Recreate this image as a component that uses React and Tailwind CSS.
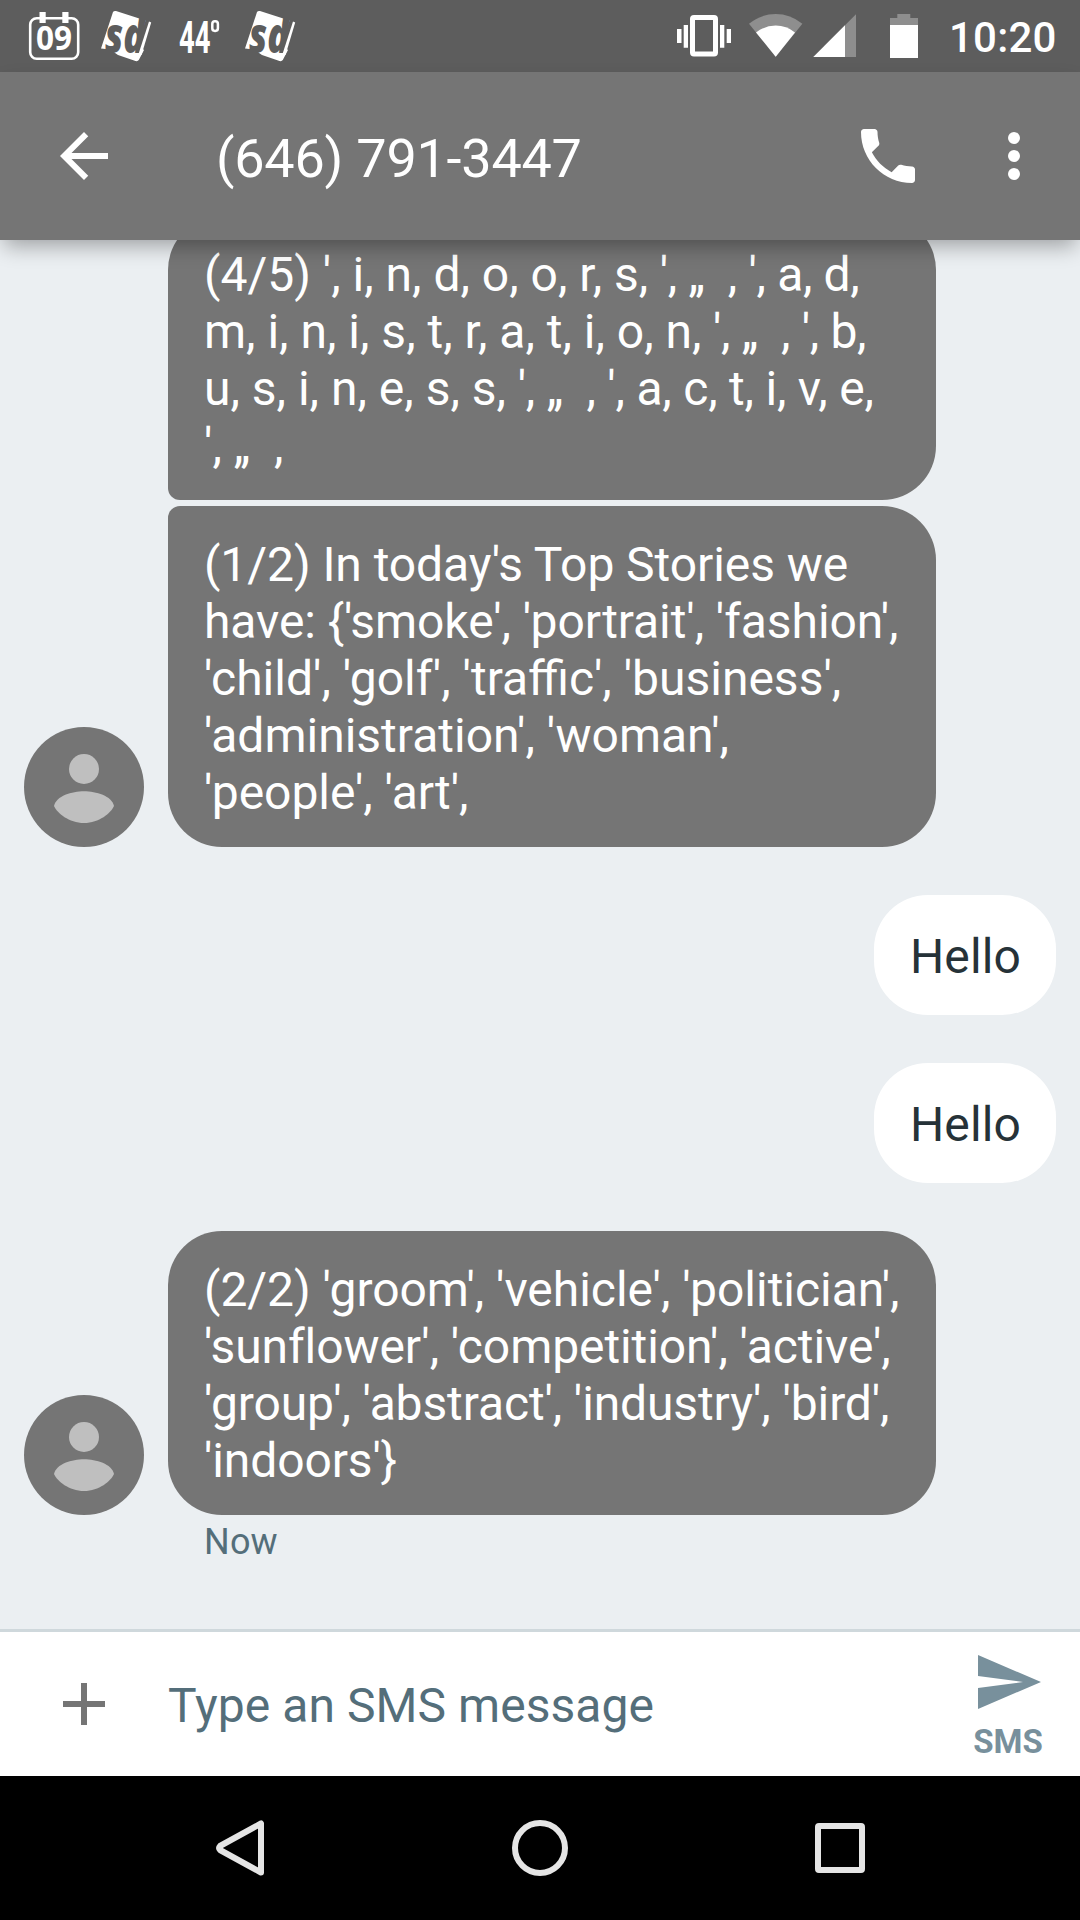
function SdIcon() {
  return (
    <svg className="block h-[72px] w-[60px] shrink-0" viewBox="99 0 60 72">
      <path d="M116 11L145.500 20.500L138 45L144 50L138.800 60Q137.700 61.600 135.500 61L118 55L110 49.500L101 48.500L113 12Q114 10.500 116 11Z" fill="#fff" />
      <text x="105" y="53" fontSize="49" fontFamily="Open Sans, sans-serif" fontWeight="800" fontStyle="italic" textLength="40" lengthAdjust="spacingAndGlyphs" fill="#5d5d5d">sd</text>
      <path d="M149 21.500L151.200 22.500L141.500 55L138.500 54Z" fill="#fff" />
    </svg>
  );
}

function StatusBar() {
  return (
    <div className="flex h-[72px] shrink-0 items-center bg-[#5d5d5d] pl-[27px] pr-6">
      <svg className="block h-[72px] w-[54px] shrink-0" viewBox="27 0 54 72">
        <rect x="30.200" y="18.200" width="48" height="40.500" rx="6.500" fill="none" stroke="#fff" strokeWidth="2.600" />
        <rect x="39.500" y="12" width="6.200" height="11" fill="#fff" />
        <rect x="62.300" y="12" width="6.200" height="11" fill="#fff" />
        <text x="36" y="49.500" fontSize="34" fontWeight="700" fontFamily="Open Sans, sans-serif" textLength="36" lengthAdjust="spacingAndGlyphs" fill="#fff">09</text>
      </svg>
      <div className="w-[18px]" />
      <SdIcon />
      <svg className="ml-[18px] block h-[72px] w-[60px] shrink-0" viewBox="177 0 60 72">
        <text x="179" y="52.500" fontSize="44" fontWeight="700" fontFamily="Roboto, sans-serif" textLength="31.500" lengthAdjust="spacingAndGlyphs" fill="#fff">44</text>
        <rect x="212.300" y="21.300" width="5.600" height="9.600" rx="2.600" fill="none" stroke="#fff" strokeWidth="2.500" />
      </svg>
      <div className="w-[6px]" />
      <SdIcon />
      <svg className="ml-auto block h-[72px] w-[246px] shrink-0" viewBox="675 0 246 72" fill="#fff">
        <rect x="692.500" y="17.500" width="23" height="36.500" rx="1.500" fill="none" stroke="#fff" strokeWidth="5" />
        <path d="M683.700 25h4.300v22.700h-4.300zM677 29h4.500v14H677zM720 25h4.300v22.700H720zM726.700 29h4.300v14h-4.300z" />
        <path d="M775.700 56.700L749 23.700Q761 14 775.700 14T802.400 23.700Z" fillOpacity="0.300" />
        <path d="M775.700 56.700L756 32.400Q765 25.600 775.700 25.600T795 32.400Z" />
        <path d="M813.300 57L856 14.300V57Z" fillOpacity="0.300" />
        <path d="M813.300 57L845 25.300V57Z" />
        <path d="M890 18h7.300v-4h13v4H918v7H890z" fillOpacity="0.300" />
        <path d="M890 25h28v33h-28z" />
      </svg>
      <span className="ml-[28px] w-[107px] whitespace-nowrap pt-1 text-right text-[42px] font-medium leading-[74px] tracking-[0.2px] text-white">10:20</span>
    </div>
  );
}

function AppBar() {
  return (
    <header className="relative z-10 flex h-[168px] shrink-0 items-center bg-[#757575] pl-12 pr-[30px] text-white shadow-[0_10px_20px_-4px_rgba(0,0,0,0.33)]">
      <svg className="size-[72px]" viewBox="0 0 24 24" fill="currentColor">
        <path d="M20 11H7.830l5.590-5.590L12 4l-8 8 8 8 1.410-1.410L7.830 13H20v-2z" />
      </svg>
      <h1 className="ml-24 flex-1 pt-[5px] text-[54px] font-normal leading-[63px] tracking-[-0.24px]">(646) 791-3447</h1>
      <svg className="size-[72px]" viewBox="0 0 24 24" fill="currentColor">
        <path d="M6.620 10.790c1.440 2.830 3.760 5.140 6.590 6.590l2.200-2.200c.270-.270.670-.360 1.020-.240 1.120.370 2.330.570 3.570.570.550 0 1 .450 1 1V20c0 .550-.450 1-1 1-9.390 0-17-7.610-17-17 0-.550.450-1 1-1h3.500c.550 0 1 .450 1 1 0 1.250.2 2.450.570 3.570.110.350.030.740-.250 1.020l-2.200 2.200z" />
      </svg>
      <svg className="ml-[54px] size-[72px]" viewBox="0 0 24 24" fill="currentColor">
        <circle cx="12" cy="6" r="2" />
        <circle cx="12" cy="12" r="2" />
        <circle cx="12" cy="18" r="2" />
      </svg>
    </header>
  );
}

function Avatar() {
  return (
    <svg className="mr-6 block size-[120px] shrink-0" viewBox="0 0 120 120">
      <circle cx="60" cy="60" r="60" fill="#757575" />
      <circle cx="60" cy="42" r="15" fill="#bfbfbf" />
      <path d="M30 79C32 69 48 64.300 60 64.300S88 69 90 79C87 86 75 96 60 96S33 86 30 79Z" fill="#bfbfbf" />
    </svg>
  );
}

function Incoming({ avatar, shape, children }) {
  return (
    <div className="flex items-end pl-6">
      {avatar ? <Avatar /> : <div className="w-36 shrink-0" />}
      <div className={`w-[768px] whitespace-pre bg-[#757575] px-9 pb-[26px] pt-[30px] text-[48px] leading-[57px] text-white ${shape}`}>
        {children}
      </div>
    </div>
  );
}

function Outgoing({ text }) {
  return (
    <div className="mt-12 flex justify-end pr-6">
      <div className="flex h-[120px] w-[182px] items-center rounded-[54px] bg-white pl-9 pt-[2px] text-[48px] leading-[57px] tracking-[0.1px] text-[#263238]">{text}</div>
    </div>
  );
}

export default function App() {
  return (
    <div className="flex h-[1920px] w-[1080px] flex-col overflow-hidden bg-[#ebeff2] font-['Roboto',sans-serif]">
      <StatusBar />
      <AppBar />
      <main className="flex min-h-0 flex-1 flex-col overflow-hidden">
        <div className="-mt-6">
          <Incoming shape="rounded-[54px] rounded-bl-[12px]">
            <p>{"(4/5) ', i, n, d, o, o, r, s,"}<span className="tracking-[-0.35px]">{" ', „  , ', a, d,"}</span></p>
            <p>{"m, i, n, i, s, t, r, a, t, i, o, n,"}<span className="tracking-[-0.35px]">{" ', „  , ', b,"}</span></p>
            <p>{"u, s, i, n, e, s, s,"}<span className="tracking-[-0.22px]">{" ', „  , ', a, c, t, i, v, e,"}</span></p>
            <p>{"', „  ,"}</p>
          </Incoming>
        </div>
        <div className="mt-[6px]">
          <Incoming avatar shape="rounded-[54px] rounded-tl-[12px]">
            <p className="tracking-[-0.07px]">(1/2) In today's Top Stories we</p>
            <p className="tracking-[-0.07px]">{"have: {'smoke', 'portrait', 'fashion',"}</p>
            <p>'child', 'golf', 'traffic', 'business',</p>
            <p>'administration', 'woman',</p>
            <p className="tracking-[-0.07px]">'people', 'art',</p>
          </Incoming>
        </div>
        <Outgoing text="Hello" />
        <Outgoing text="Hello" />
        <div className="mt-12">
          <Incoming avatar shape="rounded-[54px]">
            <p className="tracking-[-0.04px]">(2/2) 'groom', 'vehicle', 'politician',</p>
            <p className="tracking-[-0.08px]">'sunflower', 'competition', 'active',</p>
            <p className="tracking-[-0.120px]">'group', 'abstract', 'industry', 'bird',</p>
            <p className="tracking-[-0.120px]">{"'indoors'}"}</p>
          </Incoming>
        </div>
        <p className="ml-[204px] mt-[6px] text-[36px] leading-[42px] tracking-[0.2px] text-[#546e7a]">Now</p>
      </main>
      <footer className="flex h-[147px] shrink-0 items-center border-t-[3px] border-[#cfd8dc] bg-white pl-12">
        <svg className="size-[72px]" viewBox="0 0 24 24" fill="#757575">
          <path d="M19 13h-6v6h-2v-6H5v-2h6V5h2v6h6v2z" />
        </svg>
        <span className="ml-12 flex-1 pt-[3px] text-[48px] leading-[57px] tracking-[0.06px] text-[#546e7a]">Type an SMS message</span>
        <div className="flex h-full w-36 flex-col items-center pt-[14px] text-[#78909c]">
          <svg className="block size-[72px]" viewBox="0 0 24 24" fill="currentColor">
            <path d="M2.010 21L23 12 2.010 3 2 10l15 2-15 2z" />
          </svg>
          <span className="mt-[5px] text-[33px] font-bold leading-[38px]">SMS</span>
        </div>
      </footer>
      <nav className="flex h-36 shrink-0 items-center justify-between bg-black px-[204px]">
        <svg className="size-[72px]" viewBox="0 0 72 72" fill="none" stroke="#e5e5e5" strokeWidth="6" strokeLinejoin="round">
          <path d="M57 11.500V60.500L16 38Q14 36 16 34Z" />
        </svg>
        <svg className="size-[72px]" viewBox="0 0 72 72" fill="none" stroke="#e5e5e5" strokeWidth="6">
          <circle cx="36" cy="36" r="25" />
        </svg>
        <svg className="size-[72px]" viewBox="0 0 72 72" fill="none" stroke="#e5e5e5" strokeWidth="6" strokeLinejoin="round">
          <rect x="14" y="14" width="44" height="44" rx="1" />
        </svg>
      </nav>
    </div>
  );
}
